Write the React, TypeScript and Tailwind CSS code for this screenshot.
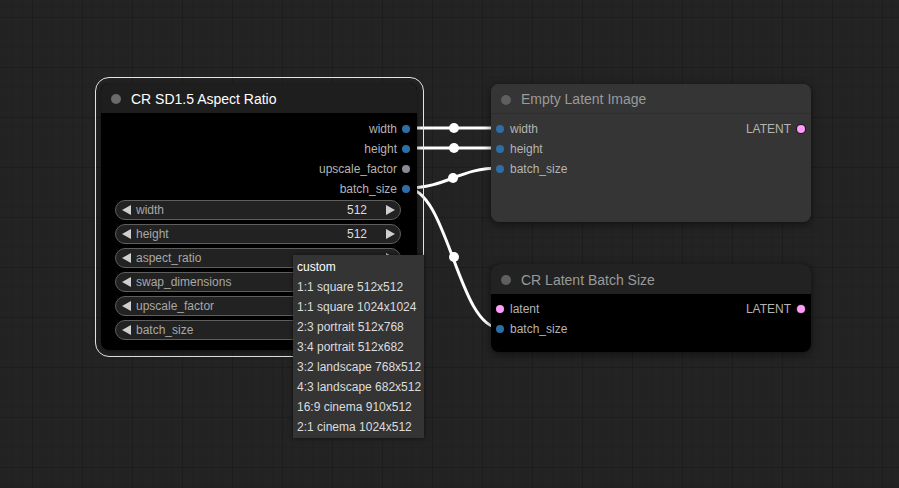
import React from "react";

const Tri = ({ dir, color }: { dir: "l" | "r"; color: string }) => (
  <svg width="9" height="10" viewBox="0 0 9 10" className="shrink-0">
    {dir === "l" ? <polygon points="9,0 9,10 0,5" fill={color} /> : <polygon points="0,0 0,10 9,5" fill={color} />}
  </svg>
);

const Dot = ({ color, ring }: { color: string; ring?: boolean }) => (
  <span
    className={"block w-[8px] h-[8px] rounded-full shrink-0" + (ring ? " shadow-[0_0_0_1px_#1a1a1a]" : "")}
    style={{ background: color }}
  />
);

const BLUE = "#2d6ea7";
const PINK = "#ff9cf9";
const GRAY = "#8a8a96";

function Widget({ label, value }: { label: string; value?: string }) {
  return (
    <div className="h-[20px] rounded-full border border-[#5e5e5e] bg-[#222] flex items-center pl-[6px] pr-[5px] text-[12px]">
      <Tri dir="l" color="#cfcfcf" />
      <span className="ml-[5px] text-[#a8a8a8]">{label}</span>
      <span className="ml-auto text-[#dddddd]">{value}</span>
      <span className="ml-[19px]">
        <Tri dir="r" color="#cfcfcf" />
      </span>
    </div>
  );
}

export default function App() {
  const outputs: [string, string][] = [
    ["width", BLUE],
    ["height", BLUE],
    ["upscale_factor", GRAY],
    ["batch_size", BLUE],
  ];
  const widgets: [string, string][] = [
    ["width", "512"],
    ["height", "512"],
    ["aspect_ratio", ""],
    ["swap_dimensions", ""],
    ["upscale_factor", ""],
    ["batch_size", ""],
  ];
  const menu = [
    "custom",
    "1:1 square 512x512",
    "1:1 square 1024x1024",
    "2:3 portrait 512x768",
    "3:4 portrait 512x682",
    "3:2 landscape 768x512",
    "4:3 landscape 682x512",
    "16:9 cinema 910x512",
    "2:1 cinema 1024x512",
  ];
  return (
    <div className="relative w-[899px] h-[488px] overflow-hidden bg-[#232323] font-['Liberation_Sans',Arial,sans-serif] bg-[linear-gradient(90deg,rgba(0,0,0,0.12)_1px,transparent_1px),linear-gradient(0deg,rgba(0,0,0,0.12)_1px,transparent_1px),linear-gradient(90deg,rgba(0,0,0,0.045)_1px,transparent_1px),linear-gradient(0deg,rgba(0,0,0,0.045)_1px,transparent_1px)] bg-[size:50px_50px,50px_50px,10px_10px,10px_10px] bg-[position:32px_18px,32px_18px,2px_8px,2px_8px]">
      {/* links */}
      <svg className="absolute inset-0" width="899" height="488">
        <g stroke="#ffffff" strokeWidth="3" fill="none">
          <path d="M406 128 L500 128" />
          <path d="M406 148 L500 148" />
          <path d="M406 188 C448 188 458 168 500 168" />
          <path d="M406 188 C448 188 458 328 500 328" />
        </g>
        <g fill="#ffffff">
          <circle cx="454" cy="128" r="5" />
          <circle cx="454" cy="148" r="5" />
          <circle cx="453" cy="178" r="5" />
          <circle cx="454" cy="257" r="5" />
        </g>
      </svg>

      {/* selection outline */}
      <div className="absolute left-[95px] top-[77px] w-[329px] h-[280px] rounded-[14px] border border-[#e6e6e6]" />

      {/* Node 1 */}
      <div className="absolute left-[101px] top-[83px] w-[316px] h-[267px] rounded-[8px] overflow-hidden bg-black flex flex-col shadow-[0_2px_6px_rgba(0,0,0,0.5)]">
        <div className="h-[30px] bg-[#1e1e1e] flex items-center pl-[10px] pt-[2px] shrink-0">
          <span className="block w-[10px] h-[10px] rounded-full bg-[#6a6a6a]" />
          <span className="ml-[10px] text-[14px] text-white">CR SD1.5 Aspect Ratio</span>
        </div>
        <div className="flex flex-col pt-[6px]">
          {outputs.map(([n, c]) => (
            <div key={n} className="h-[20px] flex items-center justify-end pr-[7px] text-[12px] text-[#b4b4b4]">
              <span>{n}</span>
              <span className="ml-[5px]">
                <Dot color={c} />
              </span>
            </div>
          ))}
        </div>
        <div className="flex flex-col gap-[4px] pt-[1px] pl-[14px] pr-[16px]">
          {widgets.map(([l, v]) => (
            <Widget key={l} label={l} value={v} />
          ))}
        </div>
      </div>

      {/* Node 2: Empty Latent Image */}
      <div className="absolute left-[491px] top-[84px] w-[320px] h-[138px] rounded-[8px] overflow-hidden bg-[#353535] flex flex-col shadow-[0_2px_8px_rgba(0,0,0,0.55)]">
        <div className="h-[30px] bg-[#353535] border-b border-[#2e2e2e] flex items-center pl-[10px] pt-[2px] shrink-0">
          <span className="block w-[10px] h-[10px] rounded-full bg-[#5f5f5f]" />
          <span className="ml-[10px] text-[14px] text-[#9a9a9a]">Empty Latent Image</span>
        </div>
        <div className="flex pt-[5px] text-[12px] text-[#b4b4b4]">
          <div className="flex flex-col">
            {["width", "height", "batch_size"].map((n) => (
              <div key={n} className="h-[20px] flex items-center pl-[5px]">
                <Dot color={BLUE} />
                <span className="ml-[6px]">{n}</span>
              </div>
            ))}
          </div>
          <div className="ml-auto h-[20px] flex items-center pr-[6px]">
            <span>LATENT</span>
            <span className="ml-[6px]">
              <Dot color={PINK} ring />
            </span>
          </div>
        </div>
      </div>

      {/* Node 3: CR Latent Batch Size */}
      <div className="absolute left-[491px] top-[264px] w-[320px] h-[88px] rounded-[8px] overflow-hidden bg-black flex flex-col shadow-[0_2px_8px_rgba(0,0,0,0.55)]">
        <div className="h-[30px] bg-[#222222] flex items-center pl-[10px] pt-[2px] shrink-0">
          <span className="block w-[10px] h-[10px] rounded-full bg-[#5f5f5f]" />
          <span className="ml-[10px] text-[14px] text-[#9a9a9a]">CR Latent Batch Size</span>
        </div>
        <div className="flex pt-[5px] text-[12px] text-[#b4b4b4]">
          <div className="flex flex-col">
            <div className="h-[20px] flex items-center pl-[5px]">
              <Dot color={PINK} />
              <span className="ml-[6px]">latent</span>
            </div>
            <div className="h-[20px] flex items-center pl-[5px]">
              <Dot color={BLUE} />
              <span className="ml-[6px]">batch_size</span>
            </div>
          </div>
          <div className="ml-auto h-[20px] flex items-center pr-[6px]">
            <span>LATENT</span>
            <span className="ml-[6px]">
              <Dot color={PINK} ring />
            </span>
          </div>
        </div>
      </div>

      {/* Dropdown menu */}
      <div className="absolute left-[293px] top-[255px] w-[131px] bg-[#343434] pt-[2px] pb-[1px] shadow-[0_0_4px_rgba(0,0,0,0.6)]">
        {menu.map((m, i) => (
          <div
            key={m}
            className={
              "h-[20px] flex items-center pl-[4px] text-[12px] whitespace-nowrap " +
              (i === 0 ? "text-white" : "text-[#dcdcdc]")
            }
          >
            {m}
          </div>
        ))}
      </div>
    </div>
  );
}
